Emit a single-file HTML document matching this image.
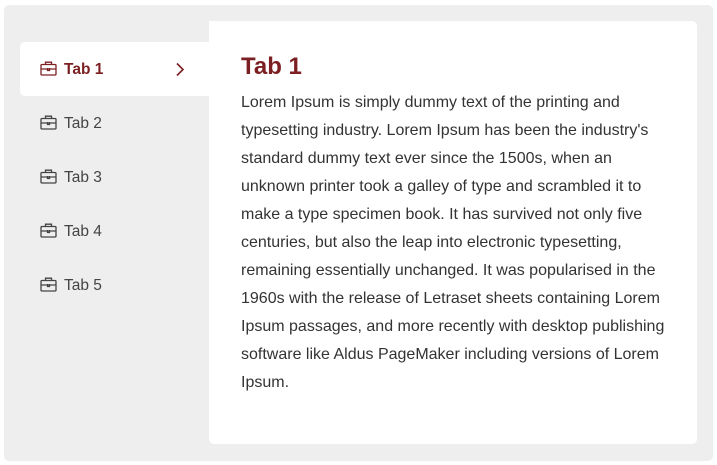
<!DOCTYPE html>
<html><head><style>
body{margin:0;width:717px;height:465px;background:#fff;font-family:"Liberation Sans",Arial,sans-serif;position:relative;overflow:hidden}
.outer{position:absolute;left:4px;top:5px;width:709px;height:456px;background:#eee;border-radius:5px}
.tab{position:absolute;left:20px;width:189px;height:54px;font-size:15.5px;color:#444}
.tab svg{position:absolute;left:20px;top:19px}
.tab span{position:absolute;left:44px;top:19px}
.tab.active{background:#fff;border-radius:5px 0 0 5px;color:#7b1f22;font-weight:bold}
.panel{position:absolute;left:209px;top:21px;width:488px;height:423px;background:#fff;border-radius:0 5px 5px 5px}
h1{position:absolute;left:32px;top:32px;margin:0;font-size:24px;color:#7b1f22;font-weight:bold}
.txt{position:absolute;left:32px;top:68px;font-size:16px;line-height:28px;color:#333;white-space:nowrap}
</style></head><body>
<div class="outer"></div>
<div class="tab active" style="top:42px"><svg width="17" height="15" viewBox="0 0 17 15" fill="none" stroke="#7b1f22" stroke-width="1.3"><rect x="1" y="3.5" width="15" height="10.5" rx="1"/><path d="M5.5 3.5V1.2h6v2.3M1 8h15M7.5 7v2.5h2V7"/></svg><span>Tab 1</span><svg style="left:155px;top:20px" width="10" height="15" viewBox="0 0 10 15" fill="none" stroke="#7b1f22" stroke-width="1.6"><path d="M2 1.5l6 6-6 6"/></svg></div>
<div class="tab" style="top:96px"><svg width="17" height="15" viewBox="0 0 17 15" fill="none" stroke="#444" stroke-width="1.3"><rect x="1" y="3.5" width="15" height="10.5" rx="1"/><path d="M5.5 3.5V1.2h6v2.3M1 8h15M7.5 7v2.5h2V7"/></svg><span>Tab 2</span></div>
<div class="tab" style="top:150px"><svg width="17" height="15" viewBox="0 0 17 15" fill="none" stroke="#444" stroke-width="1.3"><rect x="1" y="3.5" width="15" height="10.5" rx="1"/><path d="M5.5 3.5V1.2h6v2.3M1 8h15M7.5 7v2.5h2V7"/></svg><span>Tab 3</span></div>
<div class="tab" style="top:204px"><svg width="17" height="15" viewBox="0 0 17 15" fill="none" stroke="#444" stroke-width="1.3"><rect x="1" y="3.5" width="15" height="10.5" rx="1"/><path d="M5.5 3.5V1.2h6v2.3M1 8h15M7.5 7v2.5h2V7"/></svg><span>Tab 4</span></div>
<div class="tab" style="top:258px"><svg width="17" height="15" viewBox="0 0 17 15" fill="none" stroke="#444" stroke-width="1.3"><rect x="1" y="3.5" width="15" height="10.5" rx="1"/><path d="M5.5 3.5V1.2h6v2.3M1 8h15M7.5 7v2.5h2V7"/></svg><span>Tab 5</span></div>
<div class="panel">
<h1>Tab 1</h1>
<div class="txt">Lorem Ipsum is simply dummy text of the printing and<br>typesetting industry. Lorem Ipsum has been the industry's<br>standard dummy text ever since the 1500s, when an<br>unknown printer took a galley of type and scrambled it to<br>make a type specimen book. It has survived not only five<br>centuries, but also the leap into electronic typesetting,<br>remaining essentially unchanged. It was popularised in the<br>1960s with the release of Letraset sheets containing Lorem<br>Ipsum passages, and more recently with desktop publishing<br>software like Aldus PageMaker including versions of Lorem<br>Ipsum.</div>
</div>
</body></html>
